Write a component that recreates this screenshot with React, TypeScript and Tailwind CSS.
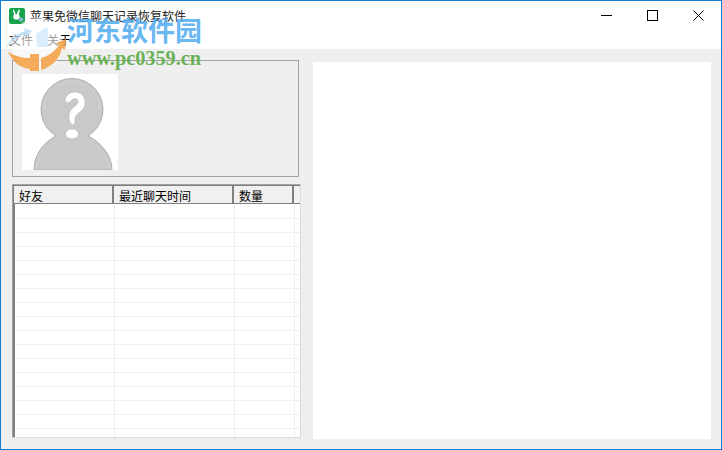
const cjk = { fontFamily: '"Noto Sans CJK SC", "Liberation Sans", sans-serif' };
const rows = Array.from({ length: 17 });

function AppIcon() {
  return (
    <svg width="16" height="16" viewBox="0 0 16 16" className="shrink-0">
      <rect width="16" height="16" rx="2" fill="#16a34a" />
      <path d="M4 1.500c1 0 2 2 2.500 4.500h1.500C8.500 3.500 9.500 1.500 10.500 1.500c.8 1-.2 3.500-.8 5 1 1 1.300 2.500.8 3.800-.7 1.700-5.300 1.700-6 0-.5-1.300-.2-2.800.8-3.800C4.700 5 3.500 2.500 4 1.500z" fill="#fff" />
      <circle cx="12" cy="11.500" r="2.200" fill="#7fb8c4" />
    </svg>
  );
}

function Avatar() {
  return (
    <svg width="96" height="96" viewBox="0 0 96 96" className="bg-white">
      <path
        d="M34 62A31 31 0 1 1 66 62C78 68 90 80 90 96H12C12 80 22 68 34 62Z"
        fill="#c9c9c9"
        stroke="#b0b0b0"
        strokeWidth="1"
      />
      <path d="M22 36C22 21 35 7 50 7s28 14 28 29" fill="none" stroke="#d2d2d2" strokeWidth="1" />
      <path d="M14 95C15 84 24 73 35 67M88 95C87 84 78 73 66 67" fill="none" stroke="#d2d2d2" strokeWidth="1" />
      <path
        d="M43 26C44 21 48 18 53 18c6 0 10 4 10 10 0 4-1 7-5 10-3 2-5 4-5 7 0 3 0 6-2 6-2 0-4-4-4-8 0-5 2-8 5-10 2-2 4-3 4-5 0-3-2-4-4-3-2 0-3 2-4 3-2 1-4 1-5-2z"
        fill="#fff"
        stroke="#b5b5b5"
        strokeWidth="0.600"
      />
      <ellipse cx="50" cy="60" rx="6.500" ry="5" fill="#fff" stroke="#b5b5b5" strokeWidth="0.600" />
    </svg>
  );
}

function WindowButtons() {
  return (
    <div className="ml-auto flex h-full items-center">
      <div className="flex w-[46px] justify-center pl-[1px]">
        <svg width="11" height="11" viewBox="0 0 11 11" shapeRendering="crispEdges">
          <path d="M0 5.500h11" stroke="#000" strokeWidth="1" />
        </svg>
      </div>
      <div className="flex w-[46px] justify-center">
        <svg width="11" height="11" viewBox="0 0 11 11" shapeRendering="crispEdges">
          <rect x="0.500" y="0.500" width="10" height="10" fill="none" stroke="#000" strokeWidth="1" />
        </svg>
      </div>
      <div className="flex w-[46px] justify-center">
        <svg width="11" height="11" viewBox="0 0 11 11">
          <path d="M0.500 0.500l10 10M10.500 0.500l-10 10" stroke="#000" strokeWidth="1" />
        </svg>
      </div>
    </div>
  );
}

function Watermark() {
  return (
    <div className="absolute left-0 top-0 h-[72px] w-[240px] pointer-events-none">
      <svg width="72" height="72" viewBox="0 0 72 72" className="absolute left-0 top-0">
        <circle cx="36" cy="43" r="26" fill="#ffffff" fillOpacity="0.6" />
        <path d="M5 47C8 39 15 33 24 30l-1-3 8 3-6 6-1-3C16 36 10 41 5 47z" fill="#4ba6ea" fillOpacity="0.35" />
        <path d="M35 33l10-7 2 2v18H36z" fill="#4ba6ea" fillOpacity="0.2" />
        <path d="M7 51c7 4 14 6 22 6v11C19 67 12 61 7 51z" fill="#f4a24a" fillOpacity="0.9" />
        <path d="M29 53h9v17h-9z" fill="#f4a24a" fillOpacity="0.9" />
        <path d="M40 57c8-2 14-7 18-13l-3-2 10-4-1 11-3-2C59 58 51 66 40 69z" fill="#f4a24a" fillOpacity="0.9" />
      </svg>
      <span
        className="absolute left-[66px] top-[11px] whitespace-nowrap text-[27px] leading-[36px] font-bold text-[#55adf0]/90"
        style={{ fontFamily: '"Noto Sans CJK SC", sans-serif' }}
      >
        河东软件园
      </span>
      <span
        className="absolute left-[66px] top-[47px] whitespace-nowrap text-[20.300px] leading-[20px] font-bold text-[#6bb257]"
        style={{ fontFamily: '"Liberation Serif", serif' }}
      >
        www.pc0359.cn
      </span>
    </div>
  );
}

export default function App() {
  return (
    <div className="relative flex h-[450px] w-[722px] flex-col overflow-hidden border border-[#0f7fd8] bg-white text-[12px] text-black" style={cjk}>
      <div className="flex h-[29px] shrink-0 items-center">
        <div className="ml-[8px] flex items-center gap-[5px]">
          <AppIcon />
          <span className="leading-none text-[#222]">苹果免微信聊天记录恢复软件</span>
        </div>
        <WindowButtons />
      </div>
      <div className="flex h-[19px] shrink-0 items-center gap-[14px] pl-[8px] leading-none">
        <span>文件</span>
        <span>关于</span>
      </div>
      <div className="flex flex-1 items-start gap-[11px] bg-[#efefef] pl-[11px]">
        <div className="flex w-[290px] flex-col">
          <div className="mt-[11px] h-[117px] w-[287px] border border-[#a0a0a0] pl-[9px] pt-[13px]">
            <Avatar />
          </div>
          <div className="mt-[7px] flex h-[254px] w-[289px] flex-col overflow-hidden border border-[#a0a0a0] border-r-[#dcdcdc] border-b-[#dcdcdc] bg-white">
            <div className="flex h-[19px] shrink-0 border-y border-l border-[#7f7f7f] bg-[#f0f0f0] leading-[19px]">
              <div className="w-[100px] border-r-2 border-[#7f7f7f] pl-[5px]">好友</div>
              <div className="w-[120px] border-r-2 border-[#7f7f7f] pl-[5px]">最近聊天时间</div>
              <div className="w-[60px] border-r-2 border-[#7f7f7f] pl-[5px]">数量</div>
              <div className="flex-1" />
            </div>
            <div className="flex flex-1 flex-col overflow-hidden border-l-2 border-[#7f7f7f] pt-px">
              {rows.map((_, i) => (
                <div key={i} className="flex h-[14px] shrink-0 border-b border-[#efefef]">
                  <div className="w-[100px] border-r border-[#efefef]" />
                  <div className="w-[120px] border-r border-[#efefef]" />
                  <div className="w-[60px] border-r border-[#efefef]" />
                </div>
              ))}
            </div>
          </div>
        </div>
        <div className="mt-[13px] h-[377px] w-[398px] bg-white" />
      </div>
      <Watermark />
    </div>
  );
}
